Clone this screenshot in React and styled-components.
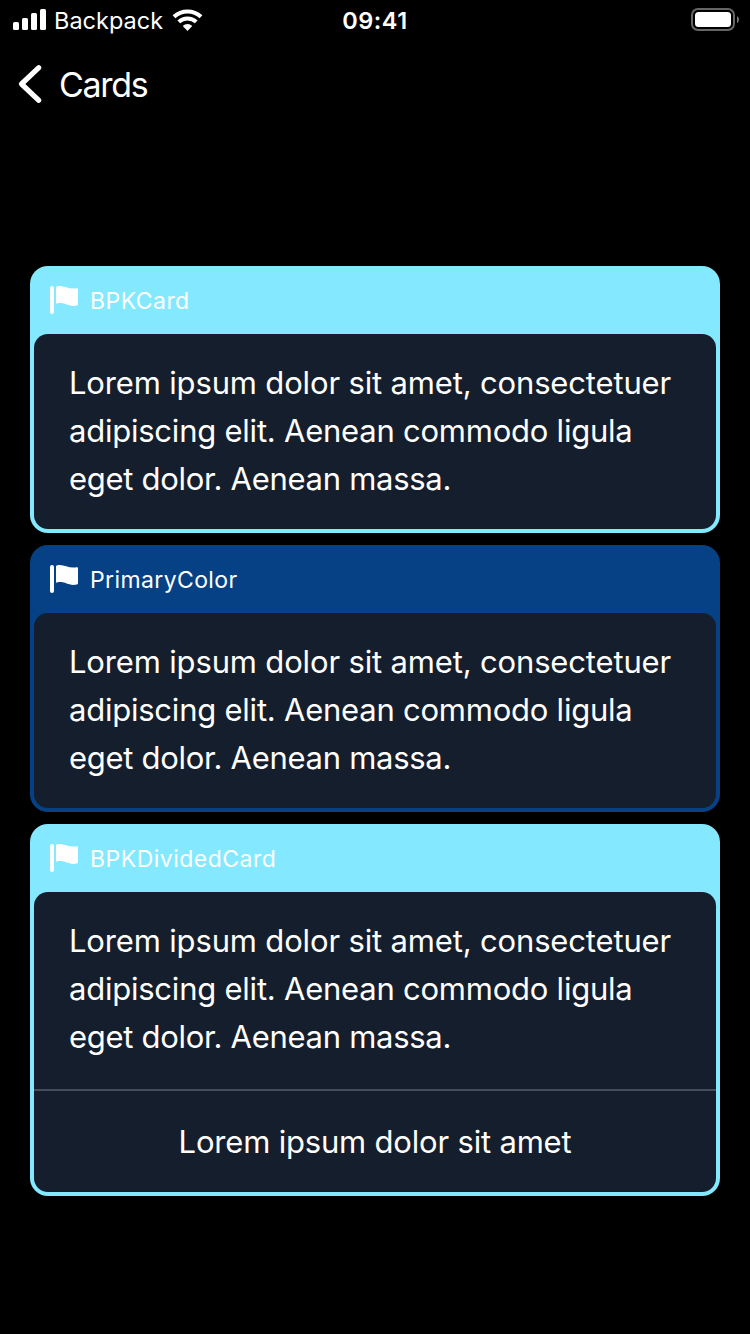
import React from "react";
import styled, { createGlobalStyle } from "styled-components";

const GlobalStyle = createGlobalStyle`
  * { box-sizing: border-box; }
  body { margin: 0; background: #000; }
`;

const Screen = styled.main`
  width: 750px;
  height: 1334px;
  background: #000;
  color: #fff;
  font-family: Inter, "Liberation Sans", sans-serif;
  display: flex;
  flex-direction: column;
  overflow: hidden;
`;

const StatusBar = styled.header`
  height: 40px;
  display: grid;
  grid-template-columns: 1fr auto 1fr;
  padding: 0 10px 0 10px;
`;

const StatusLeft = styled.div`
  display: flex;
  align-items: flex-start;
  padding-left: 3px;
`;

const Carrier = styled.span`
  font-size: 23.5px;
  line-height: 28px;
  letter-spacing: 0;
  margin: 7px 0 0 7px;
  width: 118px;
  white-space: nowrap;
`;

const Clock = styled.time`
  font-size: 23.5px;
  font-weight: 600;
  line-height: 28px;
  margin-top: 7px;
  letter-spacing: 0.5px;
`;

const StatusRight = styled.div`
  display: flex;
  justify-content: flex-end;
`;

const NavBar = styled.nav`
  height: 88px;
  display: flex;
  align-items: center;
  padding-left: 16px;
`;

const Title = styled.h1`
  margin: 1px 0 0 13px;
  font-size: 34px;
  font-weight: 400;
  line-height: 40px;
  letter-spacing: -1.3px;
`;

const CardList = styled.section`
  display: flex;
  flex-direction: column;
  gap: 12px;
  padding: 138px 30px 0;
`;

const Frame = styled.article`
  background: ${({ $color }) => $color};
  border-radius: 18px;
  padding: 0 4px 4px;
`;

const FrameHeader = styled.div`
  height: 68px;
  display: flex;
  align-items: flex-start;
  padding: 18px 0 0 15px;
`;

const FrameLabel = styled.span`
  font-size: 23px;
  line-height: 28px;
  letter-spacing: ${({ $spacing }) => $spacing}px;
  margin: 3px 0 0 10px;
`;

const CardBody = styled.div`
  background: #151e2c;
  border-radius: 14px;
`;

const Copy = styled.p`
  margin: 0;
  height: ${({ $height }) => $height}px;
  padding: 25px 0 0 35px;
  font-size: 31px;
  line-height: 48px;
`;

const Line = styled.span`
  display: block;
  white-space: nowrap;
  letter-spacing: ${({ $spacing }) => $spacing}px;
`;

const Footer = styled.div`
  height: 103px;
  border-top: 2px solid #444c5a;
  display: flex;
  justify-content: center;
  align-items: center;
  font-size: 31px;
  line-height: 48px;
  letter-spacing: -0.19px;
`;

const SignalIcon = () => (
  <svg width="34" height="40" viewBox="0 0 34 40" fill="#fff">
    <rect x="0" y="22" width="6" height="8" rx="1.5" />
    <rect x="9" y="18" width="6" height="12" rx="1.5" />
    <rect x="18" y="13" width="6" height="17" rx="1.5" />
    <rect x="27" y="9" width="6" height="21" rx="1.5" />
  </svg>
);

const WifiIcon = () => (
  <svg width="32" height="40" viewBox="0 0 32 40" fill="none" stroke="#fff" strokeWidth="4">
    <path d="M2 16.8a19.6 19.6 0 0 1 27 0" />
    <path d="M6.8 21.9a12.6 12.6 0 0 1 17.4 0" />
    <path d="M15.5 31 10.7 25.9a7 7 0 0 1 9.6 0Z" fill="#fff" stroke="none" />
  </svg>
);

const BatteryIcon = () => (
  <svg width="50" height="40" viewBox="0 0 50 40">
    <rect x="2" y="9" width="42" height="21" rx="6" fill="none" stroke="#666" strokeWidth="2" />
    <rect x="5" y="12" width="36" height="15" rx="3.5" fill="#fff" />
    <path d="M47 16q2 1 2 3.5t-2 3.5Z" fill="#777" />
  </svg>
);

const BackIcon = () => (
  <svg width="30" height="42" viewBox="0 0 30 42" fill="none">
    <path d="M22.8 4.7 5.5 21 22.8 37.3" stroke="#fff" strokeWidth="5.2" strokeLinecap="round" strokeLinejoin="round" />
  </svg>
);

const FlagIcon = () => (
  <svg width="31" height="30" viewBox="0 0 31 30" fill="#fff">
    <rect x="1" y="2" width="4" height="28" rx="2" />
    <path d="M7 3.3Q7 2.6 7.8 2.4C14.5.5 19 5.8 27.8 4.2Q29 4 29 5V20.3Q29 21.2 28 21.4C19 23.6 16 17.4 8 19.6Q7 19.8 7 19Z" />
  </svg>
);

const LINES = [
  { text: "Lorem ipsum dolor sit amet, consectetuer", spacing: -0.16 },
  { text: "adipiscing elit. Aenean commodo ligula", spacing: -0.23 },
  { text: "eget dolor. Aenean massa.", spacing: -0.29 },
];

function Card({ label, color, spacing, footer }) {
  return (
    <Frame $color={color}>
      <FrameHeader>
        <FlagIcon />
        <FrameLabel $spacing={spacing}>{label}</FrameLabel>
      </FrameHeader>
      <CardBody>
        <Copy $height={footer ? 197 : 195}>
          {LINES.map((line) => (
            <Line key={line.text} $spacing={line.spacing}>{line.text}</Line>
          ))}
        </Copy>
        {footer && <Footer>{footer}</Footer>}
      </CardBody>
    </Frame>
  );
}

export default function App() {
  return (
    <>
      <GlobalStyle />
      <Screen>
        <StatusBar>
          <StatusLeft>
            <SignalIcon />
            <Carrier>Backpack</Carrier>
            <WifiIcon />
          </StatusLeft>
          <Clock>09:41</Clock>
          <StatusRight>
            <BatteryIcon />
          </StatusRight>
        </StatusBar>
        <NavBar>
          <BackIcon />
          <Title>Cards</Title>
        </NavBar>
        <CardList>
          <Card label="BPKCard" color="#84e9ff" spacing={0.45} />
          <Card label="PrimaryColor" color="#054184" spacing={0.38} />
          <Card label="BPKDividedCard" color="#84e9ff" spacing={0.48} footer="Lorem ipsum dolor sit amet" />
        </CardList>
      </Screen>
    </>
  );
}
